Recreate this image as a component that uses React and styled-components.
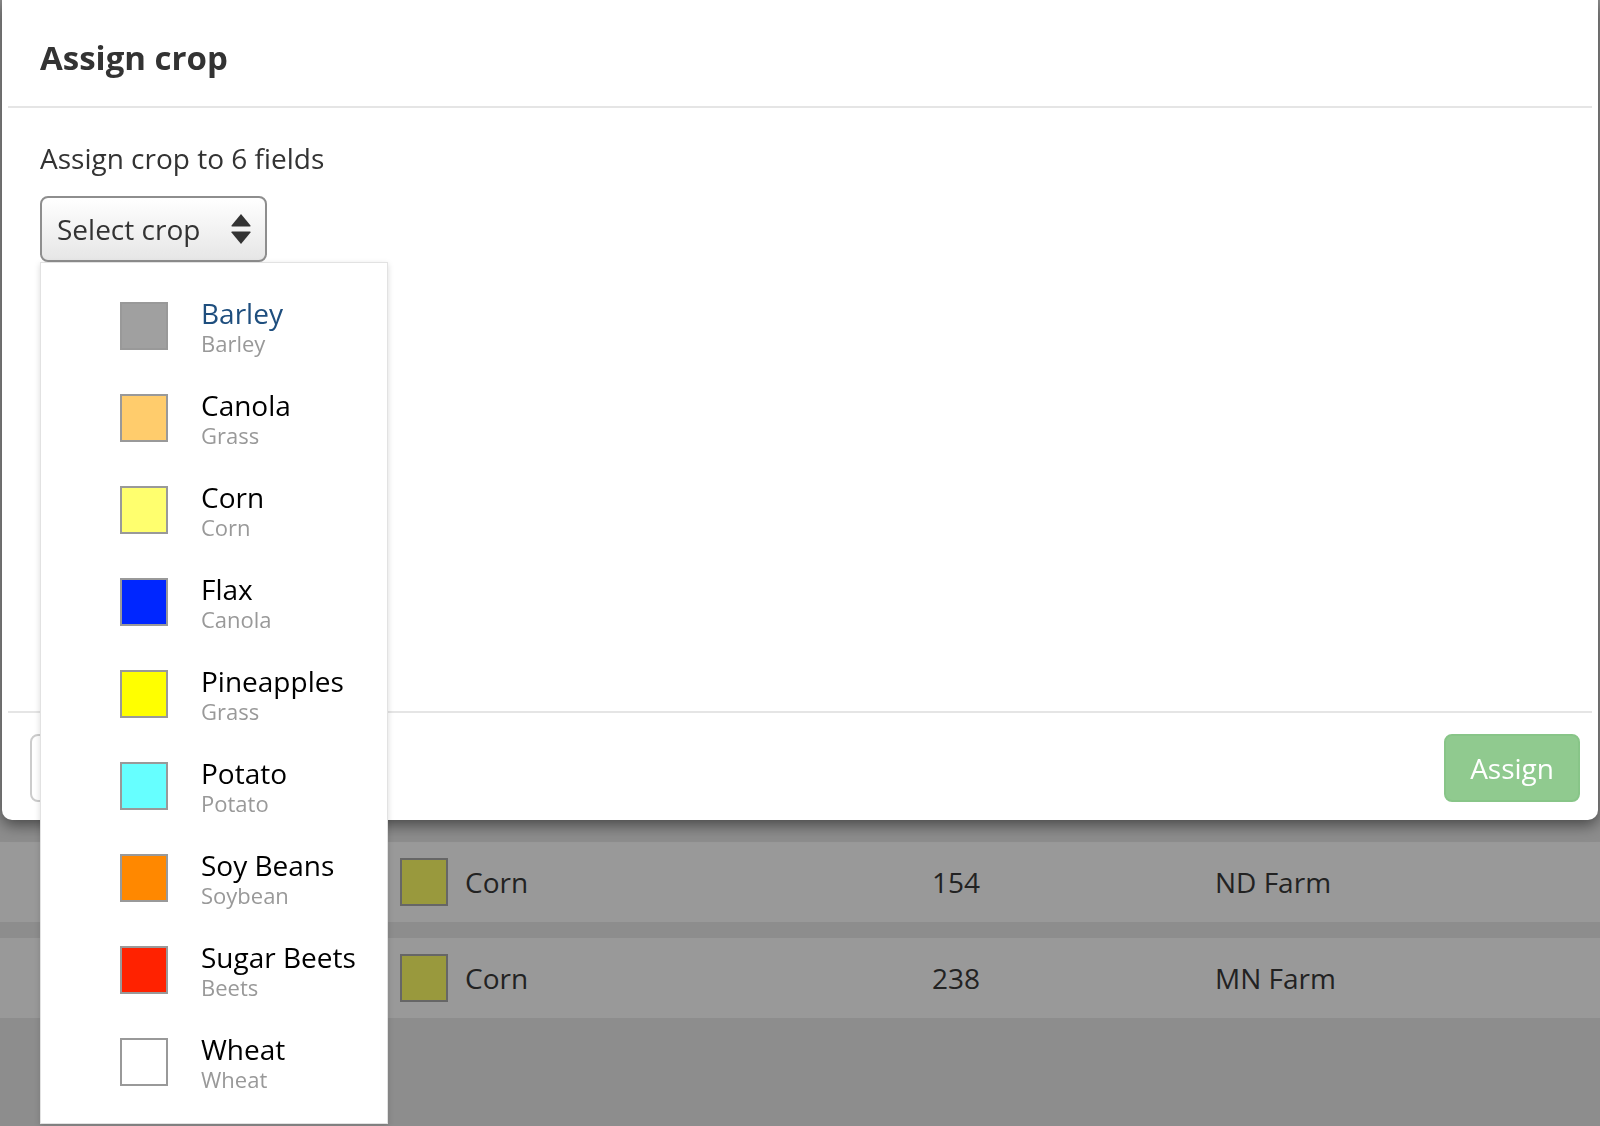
import React from 'react'
import styled, { createGlobalStyle } from 'styled-components'

const GlobalStyle = createGlobalStyle`
  html, body {
    margin: 0;
    padding: 0;
  }
  body {
    font-family: "Open Sans", "Liberation Sans", sans-serif;
    background-color: #ececec;
    color: #333;
  }
  * {
    box-sizing: border-box;
  }
`

const Page = styled.div`
  min-height: 100vh;
  padding-top: 842px;
`

const FieldRow = styled.div`
  display: grid;
  grid-template-columns: 400px 532px 283px 1fr;
  align-items: center;
  height: 80px;
  margin-bottom: 16px;
  background-color: #fff;
  font-size: 28px;
  color: #3a3a3a;
`

const CropCell = styled.div`
  display: flex;
  align-items: center;
  gap: 17px;
`

const RowSwatch = styled.span`
  width: 48px;
  height: 48px;
  border: 2px solid #aaa;
  background-color: ${p => p.color};
`

const Backdrop = styled.div`
  position: fixed;
  inset: 0;
  background-color: rgba(0, 0, 0, 0.4);
`

const Modal = styled.div`
  position: absolute;
  top: 0;
  left: 2px;
  width: 1596px;
  height: 820px;
  display: flex;
  flex-direction: column;
  background-color: #fff;
  border-radius: 0 0 10px 10px;
  box-shadow: 0 5px 15px rgba(0, 0, 0, 0.5);
`

const Header = styled.div`
  padding: 35px 32px 26px;
  margin: 0 6px;
  border-bottom: 2px solid #e5e5e5;

  h3 {
    margin: 0;
    font-size: 33px;
    font-weight: 700;
    line-height: normal;
    color: #333;
  }
`

const Body = styled.div`
  flex: 1;
  padding: 31px 32px;
  margin: 0 6px;
  border-bottom: 2px solid #e5e5e5;

  p {
    margin: 0 0 19px;
    font-size: 28px;
    line-height: normal;
  }
`

const SelectWrap = styled.div`
  position: relative;
  width: 227px;
`

const SelectBox = styled.div`
  display: flex;
  align-items: center;
  justify-content: space-between;
  height: 66px;
  padding: 0 14px 0 15px;
  border: 2px solid #8e8e8e;
  border-radius: 8px;
  background: linear-gradient(#ffffff, #e6e6e6);
  font-size: 28px;
  color: #333;
`

const Menu = styled.ul`
  position: absolute;
  top: 100%;
  left: 0;
  width: 348px;
  margin: 0;
  padding: 17px 0 15px;
  list-style: none;
  background-color: #fff;
  border: 1px solid #e2e2e2;
  box-shadow: 0 2px 6px rgba(0, 0, 0, 0.15);
  z-index: 2;
`

const MenuItem = styled.li`
  display: flex;
  align-items: center;
  gap: 33px;
  height: 92px;
  padding-left: 79px;
`

const Swatch = styled.span`
  flex: none;
  width: 48px;
  height: 48px;
  border: 2px solid #999;
  background-color: ${p => p.color};
`

const ItemText = styled.div`
  display: flex;
  flex-direction: column;
`

const ItemName = styled.span`
  font-size: 28px;
  line-height: 32px;
  color: ${p => (p.$active ? '#1e4e7e' : '#000')};
`

const ItemType = styled.span`
  margin-top: 1px;
  font-size: 22px;
  line-height: 26px;
  color: #999;
`

const Footer = styled.div`
  display: flex;
  justify-content: space-between;
  padding: 21px 18px 18px 28px;
`

const Button = styled.button`
  height: 68px;
  padding: 0 24px;
  border-radius: 8px;
  font-family: inherit;
  font-size: 28px;
  border: 2px solid ${p => (p.$primary ? '#88c588' : '#ccc')};
  background-color: ${p => (p.$primary ? '#90ca8f' : '#fff')};
  color: ${p => (p.$primary ? '#fff' : '#333')};
`

const crops = [
  { name: 'Barley', type: 'Barley', color: '#a0a0a0' },
  { name: 'Canola', type: 'Grass', color: '#ffcc6c' },
  { name: 'Corn', type: 'Corn', color: '#ffff6e' },
  { name: 'Flax', type: 'Canola', color: '#0026ff' },
  { name: 'Pineapples', type: 'Grass', color: '#ffff00' },
  { name: 'Potato', type: 'Potato', color: '#66ffff' },
  { name: 'Soy Beans', type: 'Soybean', color: '#ff8800' },
  { name: 'Sugar Beets', type: 'Beets', color: '#ff2200' },
  { name: 'Wheat', type: 'Wheat', color: '#ffffff' },
]

const fields = [
  { crop: 'Corn', acres: 154, farm: 'ND Farm' },
  { crop: 'Corn', acres: 238, farm: 'MN Farm' },
]

const SortArrows = () => (
  <svg width="20" height="32" viewBox="0 0 20 32">
    <path d="M10 1 L19.5 12.5 Q20 13.5 18.8 13.5 L1.2 13.5 Q0 13.5 0.5 12.5 Z" fill="#333" />
    <path d="M10 31 L19.5 19.5 Q20 18.5 18.8 18.5 L1.2 18.5 Q0 18.5 0.5 19.5 Z" fill="#333" />
  </svg>
)

const App = () => {
  return (
    <>
      <GlobalStyle />
      <Page>
        {fields.map((f, i) => (
          <FieldRow key={i}>
            <span />
            <CropCell>
              <RowSwatch color="#ffff66" />
              {f.crop}
            </CropCell>
            <span>{f.acres}</span>
            <span>{f.farm}</span>
          </FieldRow>
        ))}
      </Page>
      <Backdrop />
      <Modal>
        <Header>
          <h3>Assign crop</h3>
        </Header>
        <Body>
          <p>Assign crop to 6 fields</p>
          <SelectWrap>
            <SelectBox>
              <span>Select crop</span>
              <SortArrows />
            </SelectBox>
            <Menu>
              {crops.map((c, i) => (
                <MenuItem key={c.name}>
                  <Swatch color={c.color} />
                  <ItemText>
                    <ItemName $active={i === 0}>{c.name}</ItemName>
                    <ItemType>{c.type}</ItemType>
                  </ItemText>
                </MenuItem>
              ))}
            </Menu>
          </SelectWrap>
        </Body>
        <Footer>
          <Button>Cancel</Button>
          <Button $primary>Assign</Button>
        </Footer>
      </Modal>
    </>
  )
}

export default App
